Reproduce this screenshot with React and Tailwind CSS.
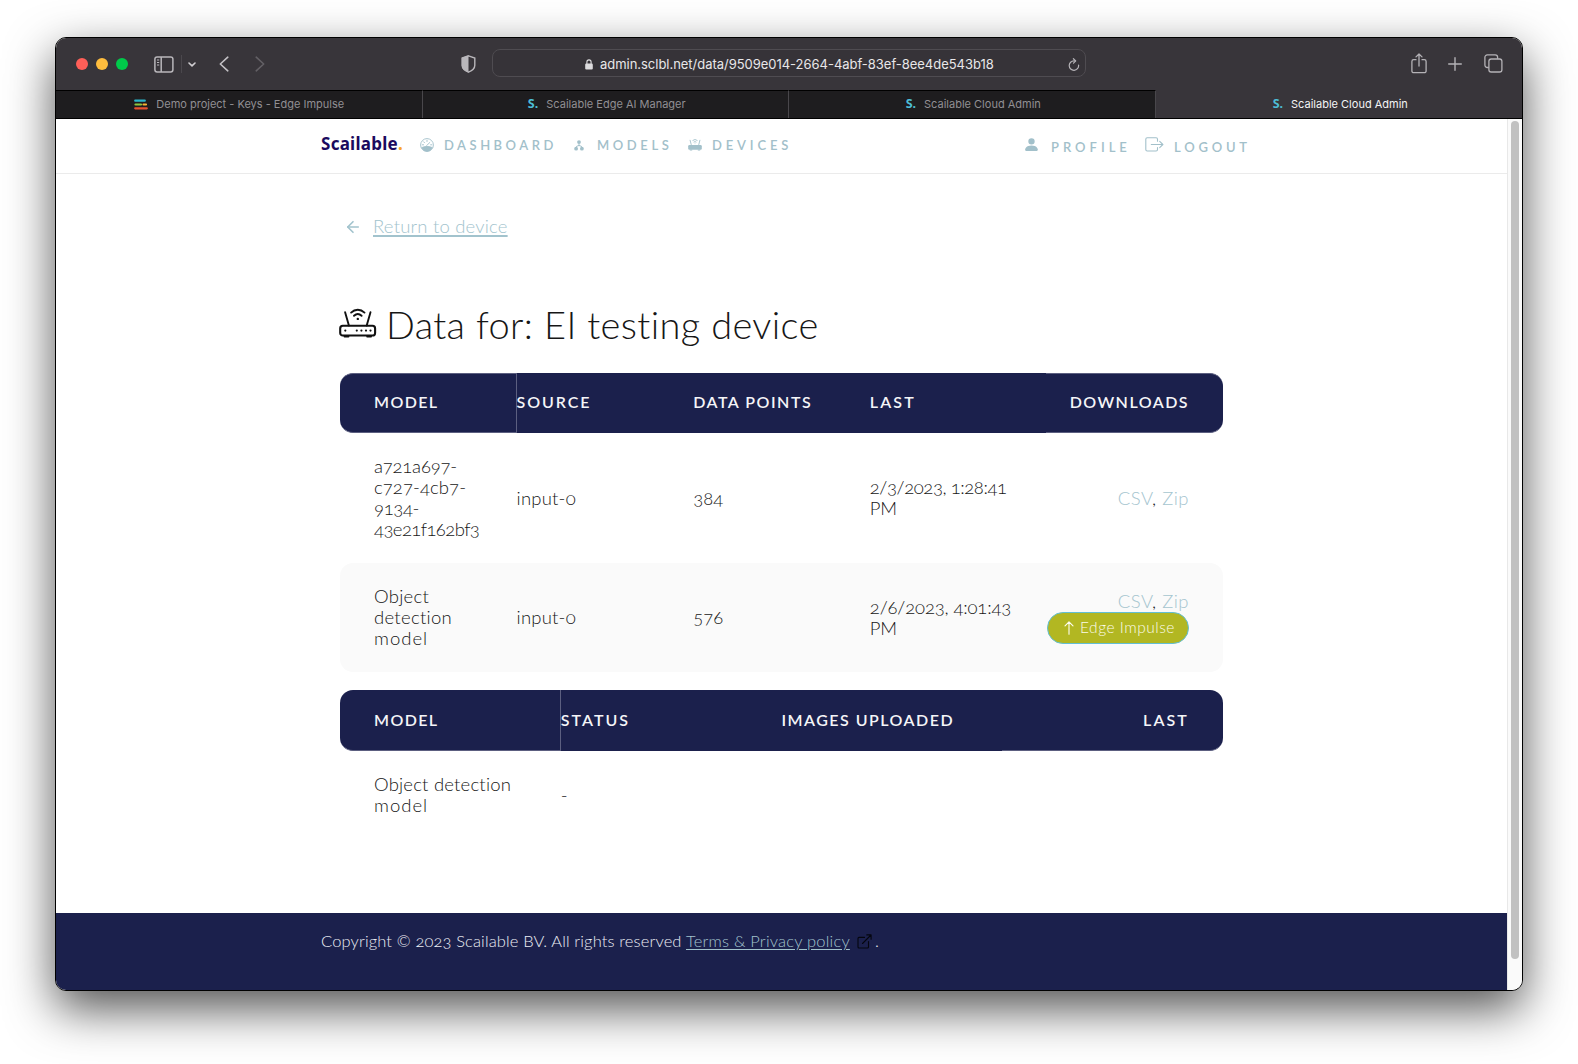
import React from "react";
import { LuArrowLeft } from "react-icons/lu";
import { BsPersonFill } from "react-icons/bs";

/* ---------- browser chrome icons ---------- */

const SidebarIcon = () => (
  <svg width="20" height="17" viewBox="0 0 20 17" fill="none" stroke="#b9b7bb" strokeWidth="1.5">
    <rect x="0.9" y="0.9" width="18" height="15" rx="2.2" />
    <path d="M7.2 1v15" />
    <path d="M3 4h2.2M3 6.5h2.2M3 9h2.2" strokeWidth="1.1" />
  </svg>
);

const ShieldIcon = () => (
  <svg width="15" height="18" viewBox="0 0 15 18">
    <path d="M7.5 0.8L13.8 3v7.2c0 3.3-3 5.6-6.3 7-3.300-1.400-6.300-3.700-6.300-7V3z" fill="none" stroke="#b9b7bb" strokeWidth="1.4" />
    <path d="M7.500 0.500v17c-3.500-1.400-6.800-3.800-6.800-7.300V2.800z" fill="#b9b7bb" />
  </svg>
);

const LockIcon = () => (
  <svg width="8" height="11" viewBox="0 0 8 11">
    <rect x="0.200" y="4.600" width="7.600" height="6" rx="1.100" fill="#dddcde" />
    <path d="M1.900 5V3a2.100 2.100 0 0 1 4.200 0v2" fill="none" stroke="#dddcde" strokeWidth="1.100" />
  </svg>
);

const ReloadIcon = () => (
  <svg width="12" height="13" viewBox="0 0 12 13" fill="none" stroke="#b4b2b6" strokeWidth="1.200" strokeLinecap="round" strokeLinejoin="round">
    <path d="M10.600 7.200A4.700 4.700 0 1 1 6 2.900h1.200" />
    <path d="M5.400 0.700L7.700 2.900 5.500 5.200" />
  </svg>
);

const ShareIcon = () => (
  <svg width="16" height="21" viewBox="0 0 16 21" fill="none" stroke="#b4b2b6" strokeWidth="1.300" strokeLinecap="round" strokeLinejoin="round">
    <path d="M5 6.700H2.700A1.800 1.800 0 0 0 0.900 8.500v9.400a1.800 1.800 0 0 0 1.800 1.800h10.600a1.800 1.800 0 0 0 1.800-1.800V8.500a1.800 1.800 0 0 0-1.800-1.800H11" />
    <path d="M8 13V1M5 3.900L8 1l3 2.900" />
  </svg>
);

const PlusIcon = () => (
  <svg width="14" height="14" viewBox="0 0 14 14" stroke="#b4b2b6" strokeWidth="1.400" strokeLinecap="round">
    <path d="M7 0.700v12.600M0.700 7h12.600" />
  </svg>
);

const TabsIcon = () => (
  <svg width="19" height="19" viewBox="0 0 19 19" fill="none" stroke="#b4b2b6" strokeWidth="1.300">
    <rect x="4.900" y="5" width="13" height="13" rx="2.300" />
    <path d="M4.800 13.500H3.300A2.400 2.400 0 0 1 0.900 11.100V3.300A2.400 2.400 0 0 1 3.300 0.900h7.900a2.400 2.400 0 0 1 2.400 2.400v1.500" />
  </svg>
);

const EdgeImpulseIcon = () => (
  <svg width="14" height="11" viewBox="0 0 14 11" strokeWidth="2.200" strokeLinecap="round">
    <path d="M1.200 1.700h9.600" stroke="#2bb5c9" />
    <path d="M1.500 5.500h5.500" stroke="#8cc63f" />
    <path d="M9.500 5.500h2.500" stroke="#f5b335" />
    <path d="M1.200 9.300h11.600" stroke="#e8532f" />
  </svg>
);

/* ---------- page icons ---------- */

const GaugeIcon = () => (
  <svg width="14" height="14" viewBox="0 0 14 14" fill="none" stroke="currentColor" strokeWidth="0.900">
    <circle cx="7" cy="7" r="6.400" />
    <path d="M1.700 9.600C4.500 8.100 9.500 8.100 12.300 9.600A6 6 0 0 1 7 13.300 6 6 0 0 1 1.700 9.600z" fill="currentColor" />
    <path d="M6.500 7.700L9.800 4.500M7 2.300v1.200M3.600 3.800l0.900 0.900M2.300 6.800h1.300M10.600 6.800h1.200" strokeLinecap="round" />
  </svg>
);

const ModelsIcon = () => (
  <svg width="10" height="11" viewBox="0 0 10 11" fill="currentColor">
    <circle cx="5" cy="2.100" r="1.900" />
    <circle cx="2.100" cy="8.700" r="1.900" />
    <circle cx="7.900" cy="8.700" r="1.900" />
    <path d="M4.500 3.500h1v1.600l2.500 1.200v1.300h-0.700v-0.800L5 5.900 2.700 6.800v0.800H2V6.300l2.500-1.200z" />
  </svg>
);

const RouterSmallIcon = () => (
  <svg width="14" height="12" viewBox="0 0 14 12" fill="currentColor">
    <rect x="0.200" y="5.900" width="13.600" height="4.900" rx="1.300" />
    <path d="M2 0.900l1.300 5M12 0.900l-1.300 5M4.500 1.600a3.800 3.800 0 0 1 5 0M5.600 3.200a2.200 2.200 0 0 1 2.800 0M7 4.600v0.500" fill="none" stroke="currentColor" strokeWidth="0.900" />
    <path d="M1.800 10.500h2.400v1H1.800zM9.800 10.500h2.400v1H9.800z" />
  </svg>
);

const LogoutIcon = () => (
  <svg width="19" height="15" viewBox="0 0 19 15" fill="none" stroke="currentColor" strokeWidth="1.100" strokeLinejoin="round" strokeLinecap="round">
    <path d="M12.500 4.300V2.200a1.400 1.400 0 0 0-1.400-1.400H2.200A1.400 1.400 0 0 0 0.800 2.200v10.400A1.400 1.400 0 0 0 2.200 14h8.900a1.400 1.400 0 0 0 1.400-1.400v-2" />
    <path d="M6.300 7.500h11.500M14.700 4.400l3.200 3.100-3.200 3.100" />
  </svg>
);

const RouterIcon = () => (
  <svg className="-mt-px -ml-px shrink-0" width="38" height="31" viewBox="0 0 38 31" fill="none" stroke="#111" strokeWidth="2.100" strokeLinecap="round" strokeLinejoin="round">
    <rect x="1.200" y="17.800" width="34.900" height="9.700" rx="2.600" />
    <path d="M6.100 4.200L9.900 17.500M31.500 4.200L27.700 17.500" strokeWidth="1.900" />
    <path d="M12.100 4.600c3.900-3.900 9.500-3.900 13.400 0M15 7.800c2.300-2.200 5.300-2.200 7.600 0" strokeWidth="1.900" />
    <path d="M5.500 28.600h4M28.100 28.600h4" strokeWidth="1.800" />
    <g fill="#111" stroke="none">
      <circle cx="18.800" cy="10.900" r="1.200" />
      <circle cx="6.300" cy="22.600" r="1.100" />
      <circle cx="17.800" cy="22.600" r="1.100" />
      <circle cx="22.400" cy="22.600" r="1.100" />
      <circle cx="27" cy="22.600" r="1.100" />
      <circle cx="31.500" cy="22.600" r="1.100" />
    </g>
  </svg>
);

const ExternalIcon = () => (
  <svg width="15" height="15" viewBox="0 0 15 15" fill="none" stroke="#05060f" strokeWidth="1.100" strokeLinecap="round" strokeLinejoin="round">
    <path d="M7.500 3.400H2a1 1 0 0 0-1 1V13a1 1 0 0 0 1 1h8.500a1 1 0 0 0 1-1V7.500" />
    <path d="M5.500 9.500L14 1M9.800 0.900H14.100V5.200" />
  </svg>
);

const SMark = () => (
  <span className="ml-[2px] font-['Noto_Sans'] text-[12.5px] font-bold leading-none text-[#4dbdd6]">S.</span>
);

/* ---------- browser chrome ---------- */

function Toolbar() {
  return (
    <div className="flex h-[52px] shrink-0 items-center bg-[#38353a]">
      <div className="ml-5 flex gap-2">
        <span className="size-3 rounded-full bg-[#ff5f58]" />
        <span className="size-3 rounded-full bg-[#ffbd3e]" />
        <span className="size-3 rounded-full bg-[#00ca4a]" />
      </div>
      <div className="ml-[26px] flex items-center">
        <SidebarIcon />
        <span className="ml-[7px] h-[18px] w-px bg-[#4b484d]" />
        <svg className="ml-[6px]" width="8" height="5" viewBox="0 0 8 5" fill="none" stroke="#d0ced1" strokeWidth="1.600" strokeLinecap="round" strokeLinejoin="round">
          <path d="M1 1l3 2.900L7 1" />
        </svg>
      </div>
      <svg className="ml-[23px] -mt-px" width="10" height="16" viewBox="0 0 10 16" fill="none" stroke="#c3c1c5" strokeWidth="1.600" strokeLinecap="round" strokeLinejoin="round">
        <path d="M8.800 1.200L1.300 8l7.500 6.800" />
      </svg>
      <svg className="ml-[26px] -mt-px" width="10" height="16" viewBox="0 0 10 16" fill="none" stroke="#636065" strokeWidth="1.600" strokeLinecap="round" strokeLinejoin="round">
        <path d="M1.200 1.200L8.700 8l-7.500 6.800" />
      </svg>
      <div className="ml-[196px] -mt-px">
        <ShieldIcon />
      </div>
      <div className="ml-[16px] -mt-[2px] flex h-7 w-[594px] items-center rounded-lg border border-[#4f4c51] bg-[#363338]">
        <div className="mt-[2px] ml-[92px] flex items-center gap-[7px]">
          <LockIcon />
          <span className="whitespace-nowrap font-['Inter'] text-[13px] leading-none tracking-[-0.030px] text-[#e8e7e9]">
            admin.sclbl.net/data/9509e014-2664-4abf-83ef-8ee4de543b18
          </span>
        </div>
        <div className="ml-auto mr-[5px] mt-[3px]">
          <ReloadIcon />
        </div>
      </div>
      <div className="ml-auto mr-[19px] flex items-center gap-[21px]">
        <div className="-mt-[2px]">
          <ShareIcon />
        </div>
        <PlusIcon />
        <div className="-mt-px ml-px">
          <TabsIcon />
        </div>
      </div>
    </div>
  );
}

function Tab({ icon, children, active }) {
  return (
    <div
      className={
        active
          ? "flex flex-1 items-center justify-center gap-[8px] bg-[#38353a] pl-px text-[#f4f4f5]"
          : "flex w-[366.500px] items-center justify-center gap-[8px] border-r border-t border-r-[#49474b] border-t-black bg-[#1e1d1f] pl-px text-[#918f93]"
      }
    >
      {icon}
      <span className="whitespace-nowrap font-['Inter'] text-[11px] leading-none">{children}</span>
    </div>
  );
}

function TabBar() {
  return (
    <div className="flex h-[29px] shrink-0 border-b border-black">
      <Tab icon={<EdgeImpulseIcon />}>Demo project - Keys - Edge Impulse</Tab>
      <Tab icon={<SMark />}>Scailable Edge AI Manager</Tab>
      <Tab icon={<SMark />}>Scailable Cloud Admin</Tab>
      <Tab icon={<SMark />} active>
        Scailable Cloud Admin
      </Tab>
    </div>
  );
}

/* ---------- page ---------- */

function NavLink({ icon, className, children }) {
  return (
    <a className={"flex shrink-0 items-center whitespace-nowrap " + className}>
      {icon}
      <span>{children}</span>
    </a>
  );
}

function Header() {
  return (
    <header className="flex h-[55px] shrink-0 items-start border-b border-[#ebebeb] pl-[265px] text-[13px] font-semibold leading-4 text-[#a2c0ca]">
      <div className="mt-[13px] w-[99px] whitespace-nowrap font-['Noto_Sans'] text-[17px] font-bold leading-6 tracking-[0.260px] text-[#1b0a5e]">
        Scailable<span className="text-[#f9a72b]">.</span>
      </div>
      <div className="mt-[18px] flex font-['Lato']">
        <NavLink className="w-[152px] gap-[10px] tracking-[3.500px]" icon={<GaugeIcon />}>DASHBOARD</NavLink>
        <NavLink
          className="w-[116px] gap-[11px] tracking-[3.600px]"
          icon={<span className="flex w-[14px] justify-center"><ModelsIcon /></span>}
        >
          MODELS
        </NavLink>
        <NavLink className="w-[336px] gap-[10px] tracking-[3.850px]" icon={<RouterSmallIcon />}>DEVICES</NavLink>
      </div>
      <div className="mt-[20px] flex font-['Lato']">
        <NavLink className="w-[121px] gap-[11px] tracking-[4px]" icon={<BsPersonFill className="-mt-[5px] size-[17px] -ml-px" />}>PROFILE</NavLink>
        <NavLink className="gap-[10px] tracking-[3.800px]" icon={<span className="-mt-[5px]"><LogoutIcon /></span>}>LOGOUT</NavLink>
      </div>
    </header>
  );
}

const firstHead = "rounded-l-[13px] border-r border-b border-[#5c5f80] pl-[34px]";
const lastHead = "justify-end rounded-r-[13px] border-b border-[#5c5f80] pr-[34px]";

function DataTable() {
  return (
    <section className="mt-[25px] w-[883px]">
      <div className="grid h-[60px] grid-cols-5 text-[16px] font-semibold text-[#f5f5f8] [&>div]:flex [&>div]:items-center [&>div]:bg-[#1b204c] [&>div]:pb-1">
        <div className={firstHead + " border-t tracking-[1.400px]"}>MODEL</div>
        <div className="tracking-[1.900px]">SOURCE</div>
        <div className="tracking-[1.520px]">DATA POINTS</div>
        <div className="tracking-[2.150px]">LAST</div>
        <div className={lastHead + " border-t tracking-[1.480px]"}>DOWNLOADS</div>
      </div>
      <div className="grid h-[130px] grid-cols-5 items-center">
        <div className="pl-[34px]">
          <span className="tracking-[-0.200px]">a721a697-</span>
          <br />
          <span className="tracking-[0.080px]">c727-4cb7-</span>
          <br />
          <span className="tracking-[-0.350px]">9134-</span>
          <br />
          <span className="tracking-[-0.580px]">43e21f162bf3</span>
        </div>
        <div className="tracking-[0.200px]">input-0</div>
        <div>384</div>
        <div>
          <span className="tracking-[-0.420px]">2/3/2023, 1:28:41</span>
          <br />
          <span className="tracking-[-0.200px]">PM</span>
        </div>
        <div className="pr-[34px] text-right tracking-[0.500px]">
          <a className="text-[#a5c5cf]">CSV</a>, <a className="text-[#a5c5cf]">Zip</a>
        </div>
      </div>
      <div className="grid h-[109px] grid-cols-5 items-center rounded-[13px] bg-[#fafafa]">
        <div className="pl-[34px]">
          <span className="tracking-[0.280px]">Object</span>
          <br />
          <span className="tracking-[0.280px]">detection</span>
          <br />
          <span className="tracking-[1px]">model</span>
        </div>
        <div className="tracking-[0.200px]">input-0</div>
        <div>576</div>
        <div>
          <span className="tracking-[-0.150px]">2/6/2023, 4:01:43</span>
          <br />
          <span className="tracking-[-0.200px]">PM</span>
        </div>
        <div className="flex flex-col items-end pr-[34px]">
          <div className="tracking-[0.500px]">
            <a className="text-[#a5c5cf]">CSV</a>, <a className="text-[#a5c5cf]">Zip</a>
          </div>
          <button className="flex h-8 w-[142px] items-center rounded-full border border-[#62bfd3] bg-[#b2b722] pb-px pl-4 text-[15.500px] leading-none tracking-[0.500px] text-[#fbfbe9]">
            <svg className="mr-[6px]" width="10" height="14" viewBox="0 0 10 14" fill="none" stroke="#fdfdf2" strokeWidth="1.100" strokeLinecap="round" strokeLinejoin="round">
              <path d="M5 13.300V0.900M1 4.900l4-4.100 4 4.100" />
            </svg>
            Edge Impulse
          </button>
        </div>
      </div>
    </section>
  );
}

function StatusTable() {
  return (
    <section className="mt-[18px] w-[883px]">
      <div className="grid h-[61px] grid-cols-4 text-[16px] font-semibold text-[#f5f5f8] [&>div]:flex [&>div]:items-center [&>div]:bg-[#1b204c] [&>div]:pb-[2px]">
        <div className={firstHead + " tracking-[1.400px]"}>MODEL</div>
        <div className="tracking-[2.050px]">STATUS</div>
        <div className="tracking-[1.480px]">IMAGES UPLOADED</div>
        <div className={lastHead + " tracking-[2.100px]"}>LAST</div>
      </div>
      <div className="grid h-[88px] grid-cols-4 items-center">
        <div className="pl-[34px]">
          <span className="tracking-[0.200px]">Object detection</span>
          <br />
          <span className="tracking-[1px]">model</span>
        </div>
        <div>-</div>
      </div>
    </section>
  );
}

export default function App() {
  return (
    <div className="h-[1064px] w-[1578px] overflow-hidden bg-white pl-[55px] pt-[37px]">
      <div className="flex h-[954px] w-[1468px] flex-col overflow-hidden rounded-[11px] border border-black bg-white shadow-[0_18px_48px_rgba(0,0,0,0.68)]">
        <Toolbar />
        <TabBar />
        <div className="flex min-h-0 flex-1">
          <div className="flex w-[1451px] flex-col">
            <Header />
            <main className="flex-1 whitespace-nowrap pl-[284px] font-['Lato'] text-[18.5px] font-light leading-[21px] text-[#161616] oldstyle-nums">
              <div className="mt-[42px] flex items-center pl-[4px] text-[#a2c3cd]">
                <LuArrowLeft className="size-[18px]" strokeWidth={2.2} />
                <a className="ml-[11px] tracking-[0.200px] underline decoration-2 underline-offset-[1.5px]">Return to device</a>
              </div>
              <h1 className="mt-[64px] mb-[26px] flex h-[46px] items-center text-[38px] leading-[44px] tracking-[0.350px]">
                <RouterIcon />
                <span className="ml-[9px]">Data for: EI testing device</span>
              </h1>
              <DataTable />
              <StatusTable />
            </main>
            <footer className="flex h-[77px] shrink-0 items-start whitespace-nowrap bg-[#1b204c] pl-[265px] pt-[18px] font-['Lato'] text-[16.500px] font-light leading-5 text-[#eceef4] oldstyle-nums">
              <span className="w-[361px] tracking-[0.135px]">Copyright © 2023 Scailable BV. All rights reserved</span>
              <a className="ml-[4px] tracking-[0.200px] text-[#a2c3cd] underline underline-offset-2">Terms &amp; Privacy policy</a>
              <span className="ml-[7px] mt-[3px]">
                <ExternalIcon />
              </span>
              <span className="ml-[3px]">.</span>
            </footer>
          </div>
          <div className="w-[15px] border-l border-[#e8e8e8] bg-[#fafafa] pl-[3px] pt-[2px]">
            <div className="h-[838px] w-2 rounded-full bg-[#c1c1c1]" />
          </div>
        </div>
      </div>
    </div>
  );
}
